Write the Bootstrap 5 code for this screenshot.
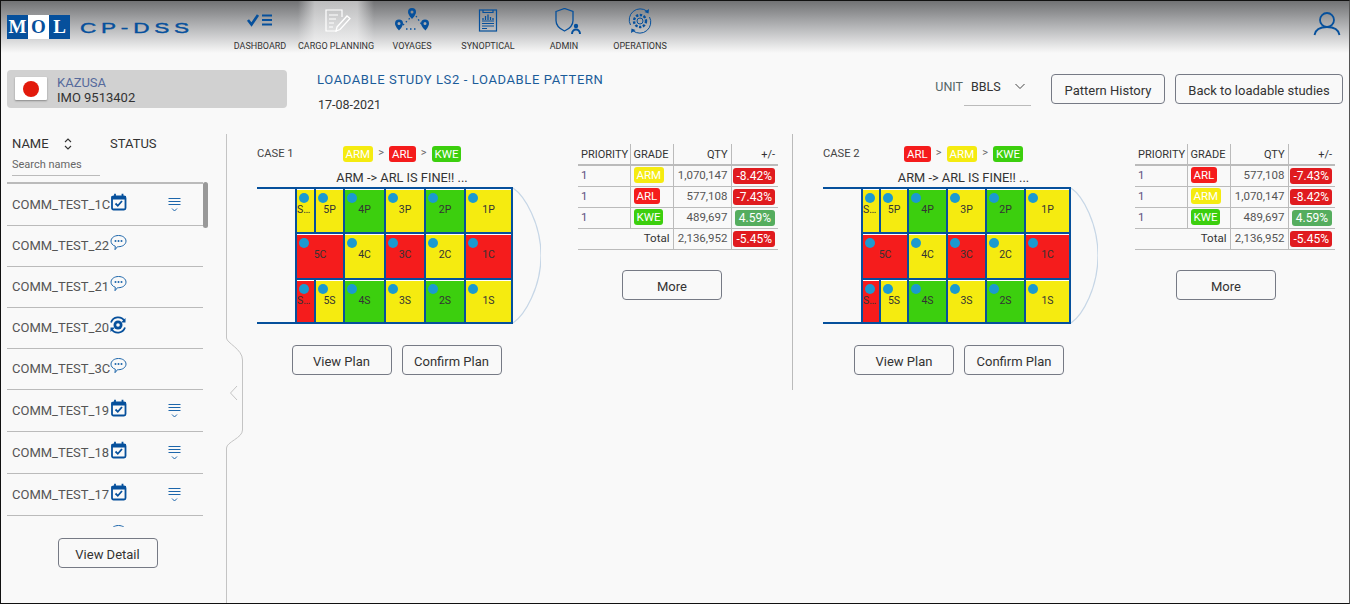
<!DOCTYPE html>
<html lang="en">
<head>
    <meta charset="UTF-8">
    <meta name="viewport" content="width=device-width, initial-scale=1.0">
    <title>CP-DSS Loadable Pattern</title>
    <link href="https://cdn.jsdelivr.net/npm/bootstrap@5.3.0/dist/css/bootstrap.min.css" rel="stylesheet">
    <style>
        body {
            font-family: Roboto, "Liberation Sans", sans-serif;
            background-color: #f9f9f9;
            color: #333;
            width: 1350px;
            height: 604px;
            overflow: hidden;
            font-size: 13px;
        }
        .frame-line {
            position: fixed;
            inset: 0;
            border: 1px solid #111;
            border-right-color: #555;
            pointer-events: none;
            z-index: 10;
        }
        /* top bar */
        .top-bar {
            height: 53px;
            background: linear-gradient(#6f7072, #b4b5b7 50%, #f9f9f9);
            position: relative;
        }
        .logo-wrap { width: 222px; padding: 15px 0 0 7px; }
        .logo-box {
            width: 63px;
            height: 24px;
            background: #06509c;
            color: #fff;
            font: bold 19px/24px "Liberation Serif", serif;
            text-align: center;
        }
        .logo-box span { flex: 1; }
        .logo-box .logo-o { background: #fff; color: #06509c; flex: 0 0 21px; }
        .logo-name {
            margin-left: 10px;
            color: #06509c;
            font: 15px/26px "Liberation Sans", sans-serif;
            letter-spacing: 3.2px;
            -webkit-text-stroke: .4px #06509c;
            transform: scaleX(1.5);
            transform-origin: left center;
            white-space: nowrap;
        }
        .nav-cell {
            width: 76px;
            text-align: center;
            font-size: 9px;
            color: #333;
            padding-top: 8px;
            white-space: nowrap;
        }
        .nav-cell svg { display: block; margin: 0 auto 6px; height: 26px; width: 40px; }
        .nav-cell.is-active {
            background: linear-gradient(to right, rgba(249,249,249,0), rgba(249,249,249,.55) 22%, rgba(249,249,249,.55) 78%, rgba(249,249,249,0));
        }
        .user-icon { position: absolute; right: 9px; top: 11px; }
        /* sub header */
        .sub-bar { height: 81px; padding: 17px 7px 0; }
        .ship-box {
            width: 280px;
            height: 38px;
            background: #d1d1d1;
            border-radius: 4px;
            padding: 7px 8px;
            line-height: 14.5px;
            font-size: 13px;
        }
        .flag {
            width: 32px;
            height: 23px;
            background: #fff;
            box-shadow: 0 1px 2px rgba(0,0,0,.35);
            border-radius: 1px;
            margin-right: 10px;
        }
        .flag i { width: 16px; height: 16px; border-radius: 50%; background: #e21a0c; }
        .ship-text { margin-top: -1px; }
        .ship-name { color: #566a9c; }
        .study-wrap { margin: 1px 0 0 30px; }
        .study-title { color: #1b5c99; font-size: 13px; letter-spacing: .62px; line-height: 18px; }
        .study-date { margin-top: 7px; line-height: 18px; font-size: 12.5px; padding-left: 1px; }
        .unit-wrap { margin-top: 7px; color: #566; font-size: 12.5px; line-height: 20px; }
        .unit-pick {
            width: 67px;
            height: 29px;
            margin-left: 1px;
            padding: 0 6px 0 7px;
            border-bottom: 1px solid #bbb;
            color: #333;
            line-height: 20px;
        }
        .btn-line {
            height: 30px;
            width: 100px;
            padding: 3px 0 0;
            font-size: 13px;
            line-height: 25px;
            color: #333;
            background: transparent;
            border: 1px solid #767a85;
            border-radius: 4px;
        }
        .btn-history { width: 114px; margin: 4px 10px 0 20px; }
        .btn-back { width: 168px; margin-top: 4px; }
        /* left list */
        .main-area { height: 470px; position: relative; }
        .side-col { width: 227px; padding-left: 7px; position: relative; }
        .side-head { height: 48px; padding: 0 0 0 5px; position: relative; font-size: 13px; }
        .head-name { width: 51px; margin-top: 2px; line-height: 16px; }
        .head-status { margin: 2px 0 0 37px; line-height: 16px; }
        .head-sort { margin: 3px 0 0 0; width: 10px; }
        .search-names {
            width: 88px;
            border-bottom: 1px solid #bbb;
            font-size: 11px;
            line-height: 14px;
            height: 21px;
            color: #666;
            padding-top: 3px;
            margin-top: 3px;
        }
        .side-list { width: 196px; height: 345px; overflow: hidden; border-top: 2px solid #bbb; border-radius: 0; }
        .side-list .list-group-item {
            background: transparent;
            padding: 0 0 0 5px;
            height: 42px;
            flex: none;
            border-bottom: 1px solid #bbb;
            font-size: 13px;
            color: #555;
        }
        .side-list .row-b { height: 41px; }
        .side-list .row-peek { padding-top: 14px; }
        .row-name { width: 98px; white-space: nowrap; flex: none; }
        .row-icon { margin: -6px 0 0 -1px; flex: none; position: relative; }
        .row-filter { margin: 0 0 0 41px; flex: none; }
        .list-thumb {
            position: absolute;
            left: 203px;
            top: 48px;
            width: 5px;
            height: 46px;
            background: #999;
            border-radius: 3px;
        }
        .side-foot { padding-top: 11px; width: 196px; padding-left: 5px; }
        .side-edge { position: absolute; left: 220px; top: 0; }
        /* case panels */
        .case-col { padding: 10px 14px 0 30px; height: 256px; width: 566px; }
        .case-col.has-divider { border-right: 1px solid #bbb; }
        .case-col.is-last { width: 557px; padding-right: 15px; }
        .ship-part { flex: 1; margin-top: 2px; min-width: 0; }
        .chip-row { display: grid; grid-template-columns: 1fr auto 1fr; padding-left: 6px; margin-left: -6px; height: 16px; }
        .case-label { font-size: 11.2px; line-height: 16px; color: #444; }
        .chip-line { padding-left: 6px; }
        .chip-sep { color: #666; font-size: 11px; margin: 0 5px; line-height: 14px; }
        .grade-chip {
            display: inline-block;
            border-radius: 3px;
            color: #fff;
            font-size: 11.5px;
            line-height: 16px;
            padding: 0 3px;
            text-align: center;
        }
        .bg-arm { background: #f5eb10; }
        .bg-arl { background: #f51c1c; }
        .bg-kwe { background: #3ccf0e; }
        .hull-note { text-align: center; padding-left: 6px; font-size: 12.8px; line-height: 16px; margin-top: 8px; height: 17px; color: #333; }
        .hull-wrap { height: 137px; }
        .hull-stern { width: 38px; border-top: 2px solid #06509c; border-bottom: 2px solid #06509c; }
        .hull-grid {
            display: grid;
            gap: 2px;
            padding: 2px;
            background: #06509c;
            grid-template-rows: 43px 44px 42px;
        }
        .hull-a { grid-template-columns: 17px 27px 39px 38px 38px 45px; }
        .hull-b { grid-template-columns: 16px 26px 37px 37px 37px 43px; }
        .tank {
            position: relative;
            font-size: 10.5px;
            color: #333;
            text-align: center;
            border-top: 1px solid #fff;
            line-height: 40px;
            overflow: hidden;
            white-space: nowrap;
            text-overflow: ellipsis;
        }
        .tank::before {
            content: "";
            position: absolute;
            left: 2px;
            top: 3px;
            width: 10px;
            height: 10px;
            border-radius: 50%;
            background: #1b9ad0;
        }
        .span-two { grid-column: span 2; }
        .bow-curve { flex: none; margin-left: 0; }
        .plan-btns { padding: 21px 5px 0 0; gap: 10px; }
        .plan-btns-b { padding-right: 3px; }
        /* grade table */
        .grade-part { width: 200px; margin-left: 37px; flex: none; }
        .grade-table { font-size: 11.5px; margin: 0; --bs-table-bg: transparent; table-layout: fixed; }
        .grade-table th, .grade-table td {
            height: 21px;
            padding: 0 3px;
            line-height: 19px;
            border-bottom: 1px solid #bbb;
            white-space: nowrap;
            vertical-align: middle;
        }
        .grade-table thead th { font-weight: 400; font-size: 11px; border-bottom: 2px solid #bbb; color: #333; }
        .grade-table .cut { border-right: 1px solid #bbb; }
        .cell-pri { color: #5b4f80; }
        .cell-qty { text-align: right; color: #555; padding-right: 4px; }
        .pct-chip {
            display: inline-block;
            border-radius: 3px;
            color: #fff;
            line-height: 16px;
            padding: 0 3px;
            font-size: 12px;
            vertical-align: middle;
        }
        .pct-bad { background: #e01b1f; }
        .pct-good { background: #55ad5e; padding: 0 4px; }
        .grade-table .cell-pct { text-align: right; padding: 0 3px 0 0; }
        .cell-total { text-align: right; color: #333; }
        .more-a { padding: 20px 12px 0 0; }
        .more-b { padding: 20px 18px 0 0; }
    </style>
</head>
<body>
    <div class="frame-line"></div>

    <svg width="0" height="0" class="position-absolute">
        <symbol id="ic-cal" viewBox="0 0 18 18">
            <rect x="3" y="3.500" width="13.500" height="13" rx="1.500" fill="none" stroke="#06509c" stroke-width="1.800"/>
            <rect x="2.500" y="3" width="14.500" height="3.500" fill="#06509c"/>
            <path d="M6 .8v4M13.500 .8v4" stroke="#06509c" stroke-width="1.800"/>
            <path d="M6.500 10.500l2.300 2.300 4.200-4.800" fill="none" stroke="#06509c" stroke-width="1.800"/>
        </symbol>
        <symbol id="ic-chat" viewBox="0 0 18 18">
            <path d="M9.500 1.500c4 0 7.500 2.300 7.500 5.600s-3.500 5.600-7.500 5.600h-1l-2.500 3 .3-3.500c-2.800-.8-4.300-3-4.300-5.100 0-3.300 3.500-5.600 7.500-5.600z" fill="#f9f9f9" stroke="#1d66ab" stroke-width="1"/>
            <circle cx="6.500" cy="7" r="1" fill="#1d66ab"/><circle cx="9.500" cy="7" r="1" fill="#1d66ab"/><circle cx="12.500" cy="7" r="1" fill="#1d66ab"/>
        </symbol>
        <symbol id="ic-run" viewBox="0 0 18 18">
            <circle cx="9" cy="9" r="7.500" fill="#f9f9f9"/>
            <circle cx="9" cy="9" r="4.500" fill="#06509c"/><circle cx="9" cy="9" r="1.800" fill="#f9f9f9"/>
            <path d="M2 6.500A7.500 7.500 0 0 1 15.500 5M16 11.500A7.500 7.500 0 0 1 2.500 13" fill="none" stroke="#06509c" stroke-width="1.800"/>
            <path d="M16.500 2v4.500h-4.500M1.500 16v-4.500h4.500" fill="#06509c"/>
        </symbol>
        <symbol id="ic-lines" viewBox="0 0 13 16">
            <path d="M.5 1.500h12M.5 4.500h12M.5 7.500h12" stroke="#1d66ab" stroke-width="1"/>
            <path d="M4 11.500l2.500 2.500 2.500-2.500" fill="none" stroke="#1d66ab" stroke-width="1"/>
        </symbol>
    </svg>

    <!-- top bar -->
    <header class="top-bar d-flex">
        <div class="logo-wrap d-flex align-items-start">
            <div class="logo-box d-flex"><span>M</span><span class="logo-o">O</span><span>L</span></div>
            <div class="logo-name">CP-DSS</div>
        </div>
        <nav class="d-flex">
            <div class="nav-cell">
                <svg viewBox="0 0 40 26"><path d="M8 12l3.500 4.500 6.500-9.500" fill="none" stroke="#06509c" stroke-width="2.600"/><path d="M22 7.500h10M22 12h10M22 16.500h10" stroke="#06509c" stroke-width="2"/></svg>
                DASHBOARD
            </div>
            <div class="nav-cell is-active">
                <svg viewBox="0 0 40 26"><path d="M21 23H10V2h16v7" fill="none" stroke="#fff" stroke-width="1.200"/><path d="M13 7h9M13 11h7M13 15h5M13 19h4" stroke="#fff" stroke-width="1.200"/><path d="M21 19l10-11 3 2.500-10 11-4 1.500z" fill="none" stroke="#fff" stroke-width="1.300"/></svg>
                CARGO PLANNING
            </div>
            <div class="nav-cell">
                <svg viewBox="0 0 40 26"><path d="M11 17l9-9M24 8l6 9M14 21h12" fill="none" stroke="#06509c" stroke-width="1.300" stroke-dasharray="1.500 2.500"/><g fill="#06509c"><path d="M20 0a4 4 0 0 1 4 4c0 3-4 7-4 7s-4-4-4-7a4 4 0 0 1 4-4zm0 2.500a1.500 1.500 0 1 0 0 3 1.500 1.500 0 0 0 0-3z"/><path d="M7 11.500a4 4 0 0 1 4 4c0 3-4 7-4 7s-4-4-4-7a4 4 0 0 1 4-4zm0 2.500a1.500 1.500 0 1 0 0 3 1.500 1.500 0 0 0 0-3z"/><path d="M33 11.500a4 4 0 0 1 4 4c0 3-3.500 7-3.500 7s-4.500-4-4.500-7a4 4 0 0 1 4-4zm0 2.500a1.500 1.500 0 1 0 0 3 1.500 1.500 0 0 0 0-3z"/></g></svg>
                VOYAGES
            </div>
            <div class="nav-cell">
                <svg viewBox="0 0 40 26"><rect x="11.500" y="2" width="17" height="21" fill="none" stroke="#06509c" stroke-width="1.200"/><path d="M15 2v2.500h10V2" fill="none" stroke="#06509c" stroke-width="1.200"/><path d="M15 12V10M17.500 12V8M20 12V6.500M22.500 12V9M25 12V10" stroke="#06509c" stroke-width="1.300"/><path d="M14 13h12M14 15.500h12M14 18h12M14 20.500h5" stroke="#06509c" stroke-width="1.100"/></svg>
                SYNOPTICAL
            </div>
            <div class="nav-cell">
                <svg viewBox="0 0 40 26"><path d="M12 3.500L20.500 .5 29 3.500v9c0 5-4 8.500-8.500 10.500C16 21 12 17.500 12 12.500z" fill="none" stroke="#06509c" stroke-width="1.300"/><circle cx="32" cy="18" r="2.200" fill="#06509c"/><path d="M28 26c0-6 8-6 8 0" fill="none" stroke="#06509c" stroke-width="2"/></svg>
                ADMIN
            </div>
            <div class="nav-cell">
                <svg viewBox="0 0 40 26"><path d="M10.500 17A11 11 0 0 1 27 3.200M29.500 9A11 11 0 0 1 13 22.800" fill="none" stroke="#06509c" stroke-width="1"/><path d="M29 1l-.5 4.500-4-1.500zM11 25l.5-4.500 4 1.500z" fill="#06509c"/><circle cx="20" cy="13" r="6" fill="none" stroke="#06509c" stroke-width="2.400" stroke-dasharray="2.400 1.500"/><circle cx="20" cy="13" r="3" fill="none" stroke="#06509c" stroke-width="1"/></svg>
                OPERATIONS
            </div>
        </nav>
        <svg class="user-icon" width="28" height="26" viewBox="0 0 28 26"><circle cx="14" cy="9" r="7" fill="none" stroke="#06509c" stroke-width="1.800"/><path d="M1.500 24c1-5.500 6-8 12.500-8s11.500 2.500 12.500 8" fill="none" stroke="#06509c" stroke-width="1.800"/></svg>
    </header>

    <!-- ship and study info -->
    <div class="sub-bar d-flex align-items-start">
        <div class="ship-box d-flex">
            <div class="flag d-flex align-items-center justify-content-center flex-none"><i></i></div>
            <div class="ship-text">
                <div class="ship-name">KAZUSA</div>
                <div>IMO 9513402</div>
            </div>
        </div>
        <div class="study-wrap">
            <div class="study-title">LOADABLE STUDY LS2 - LOADABLE PATTERN</div>
            <div class="study-date">17-08-2021</div>
        </div>
        <div class="ms-auto d-flex align-items-start">
            <div class="unit-wrap d-flex">
                <span>UNIT</span>
                <div class="unit-pick d-flex justify-content-between">
                    <span>BBLS</span>
                    <svg width="10" height="20" viewBox="0 0 10 20"><path d="M.5 7l4.500 4.500L9.500 7" fill="none" stroke="#444" stroke-width="1"/></svg>
                </div>
            </div>
            <button class="btn btn-line btn-history">Pattern History</button>
            <button class="btn btn-line btn-back">Back to loadable studies</button>
        </div>
    </div>

    <div class="main-area d-flex">
        <!-- names list -->
        <aside class="side-col">
            <div class="side-head">
                <div class="d-flex">
                    <div class="head-name">NAME</div>
                    <svg class="head-sort" width="10" height="14" viewBox="0 0 10 14"><path d="M2 5l3-3 3 3M2 9l3 3 3-3" fill="none" stroke="#333" stroke-width="1.100"/></svg>
                    <div class="head-status">STATUS</div>
                </div>
                <div class="search-names">Search names</div>
            </div>
            <div class="list-group list-group-flush side-list">
                <div class="list-group-item d-flex align-items-center"><span class="row-name">COMM_TEST_1C</span><svg class="row-icon" width="18" height="18"><use href="#ic-cal"/></svg><svg class="row-filter" width="13" height="16"><use href="#ic-lines"/></svg></div>
                <div class="list-group-item row-b d-flex align-items-center"><span class="row-name">COMM_TEST_22</span><svg class="row-icon" width="18" height="18"><use href="#ic-chat"/></svg></div>
                <div class="list-group-item row-b d-flex align-items-center"><span class="row-name">COMM_TEST_21</span><svg class="row-icon" width="18" height="18"><use href="#ic-chat"/></svg></div>
                <div class="list-group-item row-b d-flex align-items-center"><span class="row-name">COMM_TEST_20</span><svg class="row-icon" width="18" height="18"><use href="#ic-run"/></svg></div>
                <div class="list-group-item row-b d-flex align-items-center"><span class="row-name">COMM_TEST_3C</span><svg class="row-icon" width="18" height="18"><use href="#ic-chat"/></svg></div>
                <div class="list-group-item d-flex align-items-center"><span class="row-name">COMM_TEST_19</span><svg class="row-icon" width="18" height="18"><use href="#ic-cal"/></svg><svg class="row-filter" width="13" height="16"><use href="#ic-lines"/></svg></div>
                <div class="list-group-item d-flex align-items-center"><span class="row-name">COMM_TEST_18</span><svg class="row-icon" width="18" height="18"><use href="#ic-cal"/></svg><svg class="row-filter" width="13" height="16"><use href="#ic-lines"/></svg></div>
                <div class="list-group-item d-flex align-items-center"><span class="row-name">COMM_TEST_17</span><svg class="row-icon" width="18" height="18"><use href="#ic-cal"/></svg><svg class="row-filter" width="13" height="16"><use href="#ic-lines"/></svg></div>
                <div class="list-group-item row-peek d-flex align-items-start"><span class="row-name"></span><svg class="row-icon" width="18" height="18"><use href="#ic-chat"/></svg></div>
            </div>
            <div class="list-thumb"></div>
            <div class="side-foot text-center"><button class="btn btn-line">View Detail</button></div>
            <svg class="side-edge" width="26" height="470" viewBox="0 0 26 470">
                <path d="M6.500 0V204c0 5 16 11 16 22v70c0 8-16 12-16 18V470" fill="none" stroke="#c4c4c4" stroke-width="1"/>
                <path d="M17 252l-6.500 7 6.500 7" fill="none" stroke="#c4c4c4" stroke-width="1"/>
            </svg>
        </aside>

        <!-- case 1 -->
        <section class="case-col has-divider d-flex align-items-start">
            <div class="ship-part">
                <div class="chip-row">
                    <div class="case-label">CASE 1</div>
                    <div class="chip-line d-flex">
                        <span class="grade-chip bg-arm">ARM</span><span class="chip-sep">&gt;</span><span class="grade-chip bg-arl">ARL</span><span class="chip-sep">&gt;</span><span class="grade-chip bg-kwe">KWE</span>
                    </div>
                </div>
                <div class="hull-note">ARM -&gt; ARL IS FINE!! ...</div>
                <div class="hull-wrap d-flex">
                    <div class="hull-stern"></div>
                    <div class="hull-grid hull-a">
                        <div class="tank bg-arm">SLOP</div><div class="tank bg-arm">5P</div><div class="tank bg-kwe">4P</div><div class="tank bg-arm">3P</div><div class="tank bg-kwe">2P</div><div class="tank bg-arm">1P</div>
                        <div class="tank bg-arl span-two">5C</div><div class="tank bg-arm">4C</div><div class="tank bg-arl">3C</div><div class="tank bg-arm">2C</div><div class="tank bg-arl">1C</div>
                        <div class="tank bg-arl">SLOP</div><div class="tank bg-arm">5S</div><div class="tank bg-kwe">4S</div><div class="tank bg-arm">3S</div><div class="tank bg-kwe">2S</div><div class="tank bg-arm">1S</div>
                    </div>
                    <svg class="bow-curve" width="28" height="137" viewBox="0 0 28 137"><path d="M0 1c12 8 28 36 28 67.500S12 128 0 136" fill="none" stroke="#c6d6e6" stroke-width="1.200"/></svg>
                </div>
                <div class="plan-btns d-flex justify-content-center">
                    <button class="btn btn-line">View Plan</button>
                    <button class="btn btn-line">Confirm Plan</button>
                </div>
            </div>
            <div class="grade-part">
                <table class="table grade-table">
                    <colgroup><col width="52"><col width="43"><col width="58"><col width="47"></colgroup>
                    <thead><tr><th class="cut">PRIORITY</th><th class="cut">GRADE</th><th class="cut text-end">QTY</th><th class="text-end">+/-</th></tr></thead>
                    <tbody>
                        <tr><td class="cut cell-pri">1</td><td class="cut"><span class="grade-chip bg-arm">ARM</span></td><td class="cut cell-qty">1,070,147</td><td class="cell-pct"><span class="pct-chip pct-bad">-8.42%</span></td></tr>
                        <tr><td class="cut cell-pri">1</td><td class="cut"><span class="grade-chip bg-arl">ARL</span></td><td class="cut cell-qty">577,108</td><td class="cell-pct"><span class="pct-chip pct-bad">-7.43%</span></td></tr>
                        <tr><td class="cut cell-pri">1</td><td class="cut"><span class="grade-chip bg-kwe">KWE</span></td><td class="cut cell-qty">489,697</td><td class="cell-pct"><span class="pct-chip pct-good">4.59%</span></td></tr>
                        <tr><td colspan="2" class="cut cell-total">Total</td><td class="cut cell-qty">2,136,952</td><td class="cell-pct"><span class="pct-chip pct-bad">-5.45%</span></td></tr>
                    </tbody>
                </table>
                <div class="more-a text-center"><button class="btn btn-line">More</button></div>
            </div>
        </section>

        <!-- case 2 -->
        <section class="case-col is-last d-flex align-items-start">
            <div class="ship-part">
                <div class="chip-row">
                    <div class="case-label">CASE 2</div>
                    <div class="chip-line d-flex">
                        <span class="grade-chip bg-arl">ARL</span><span class="chip-sep">&gt;</span><span class="grade-chip bg-arm">ARM</span><span class="chip-sep">&gt;</span><span class="grade-chip bg-kwe">KWE</span>
                    </div>
                </div>
                <div class="hull-note">ARM -&gt; ARL IS FINE!! ...</div>
                <div class="hull-wrap d-flex">
                    <div class="hull-stern"></div>
                    <div class="hull-grid hull-b">
                        <div class="tank bg-arm">SLOP</div><div class="tank bg-arm">5P</div><div class="tank bg-kwe">4P</div><div class="tank bg-arm">3P</div><div class="tank bg-kwe">2P</div><div class="tank bg-arm">1P</div>
                        <div class="tank bg-arl span-two">5C</div><div class="tank bg-arm">4C</div><div class="tank bg-arl">3C</div><div class="tank bg-arm">2C</div><div class="tank bg-arl">1C</div>
                        <div class="tank bg-arl">SLOP</div><div class="tank bg-arm">5S</div><div class="tank bg-kwe">4S</div><div class="tank bg-arm">3S</div><div class="tank bg-kwe">2S</div><div class="tank bg-arm">1S</div>
                    </div>
                    <svg class="bow-curve" width="27" height="137" viewBox="0 0 27 137"><path d="M0 1c12 8 27 36 27 67.500S12 128 0 136" fill="none" stroke="#c6d6e6" stroke-width="1.200"/></svg>
                </div>
                <div class="plan-btns plan-btns-b d-flex justify-content-center">
                    <button class="btn btn-line">View Plan</button>
                    <button class="btn btn-line">Confirm Plan</button>
                </div>
            </div>
            <div class="grade-part">
                <table class="table grade-table">
                    <colgroup><col width="52"><col width="43"><col width="58"><col width="47"></colgroup>
                    <thead><tr><th class="cut">PRIORITY</th><th class="cut">GRADE</th><th class="cut text-end">QTY</th><th class="text-end">+/-</th></tr></thead>
                    <tbody>
                        <tr><td class="cut cell-pri">1</td><td class="cut"><span class="grade-chip bg-arl">ARL</span></td><td class="cut cell-qty">577,108</td><td class="cell-pct"><span class="pct-chip pct-bad">-7.43%</span></td></tr>
                        <tr><td class="cut cell-pri">1</td><td class="cut"><span class="grade-chip bg-arm">ARM</span></td><td class="cut cell-qty">1,070,147</td><td class="cell-pct"><span class="pct-chip pct-bad">-8.42%</span></td></tr>
                        <tr><td class="cut cell-pri">1</td><td class="cut"><span class="grade-chip bg-kwe">KWE</span></td><td class="cut cell-qty">489,697</td><td class="cell-pct"><span class="pct-chip pct-good">4.59%</span></td></tr>
                        <tr><td colspan="2" class="cut cell-total">Total</td><td class="cut cell-qty">2,136,952</td><td class="cell-pct"><span class="pct-chip pct-bad">-5.45%</span></td></tr>
                    </tbody>
                </table>
                <div class="more-b text-center"><button class="btn btn-line">More</button></div>
            </div>
        </section>
    </div>

    <script src="https://cdn.jsdelivr.net/npm/bootstrap@5.3.0/dist/js/bootstrap.bundle.min.js"></script>
</body>
</html>
